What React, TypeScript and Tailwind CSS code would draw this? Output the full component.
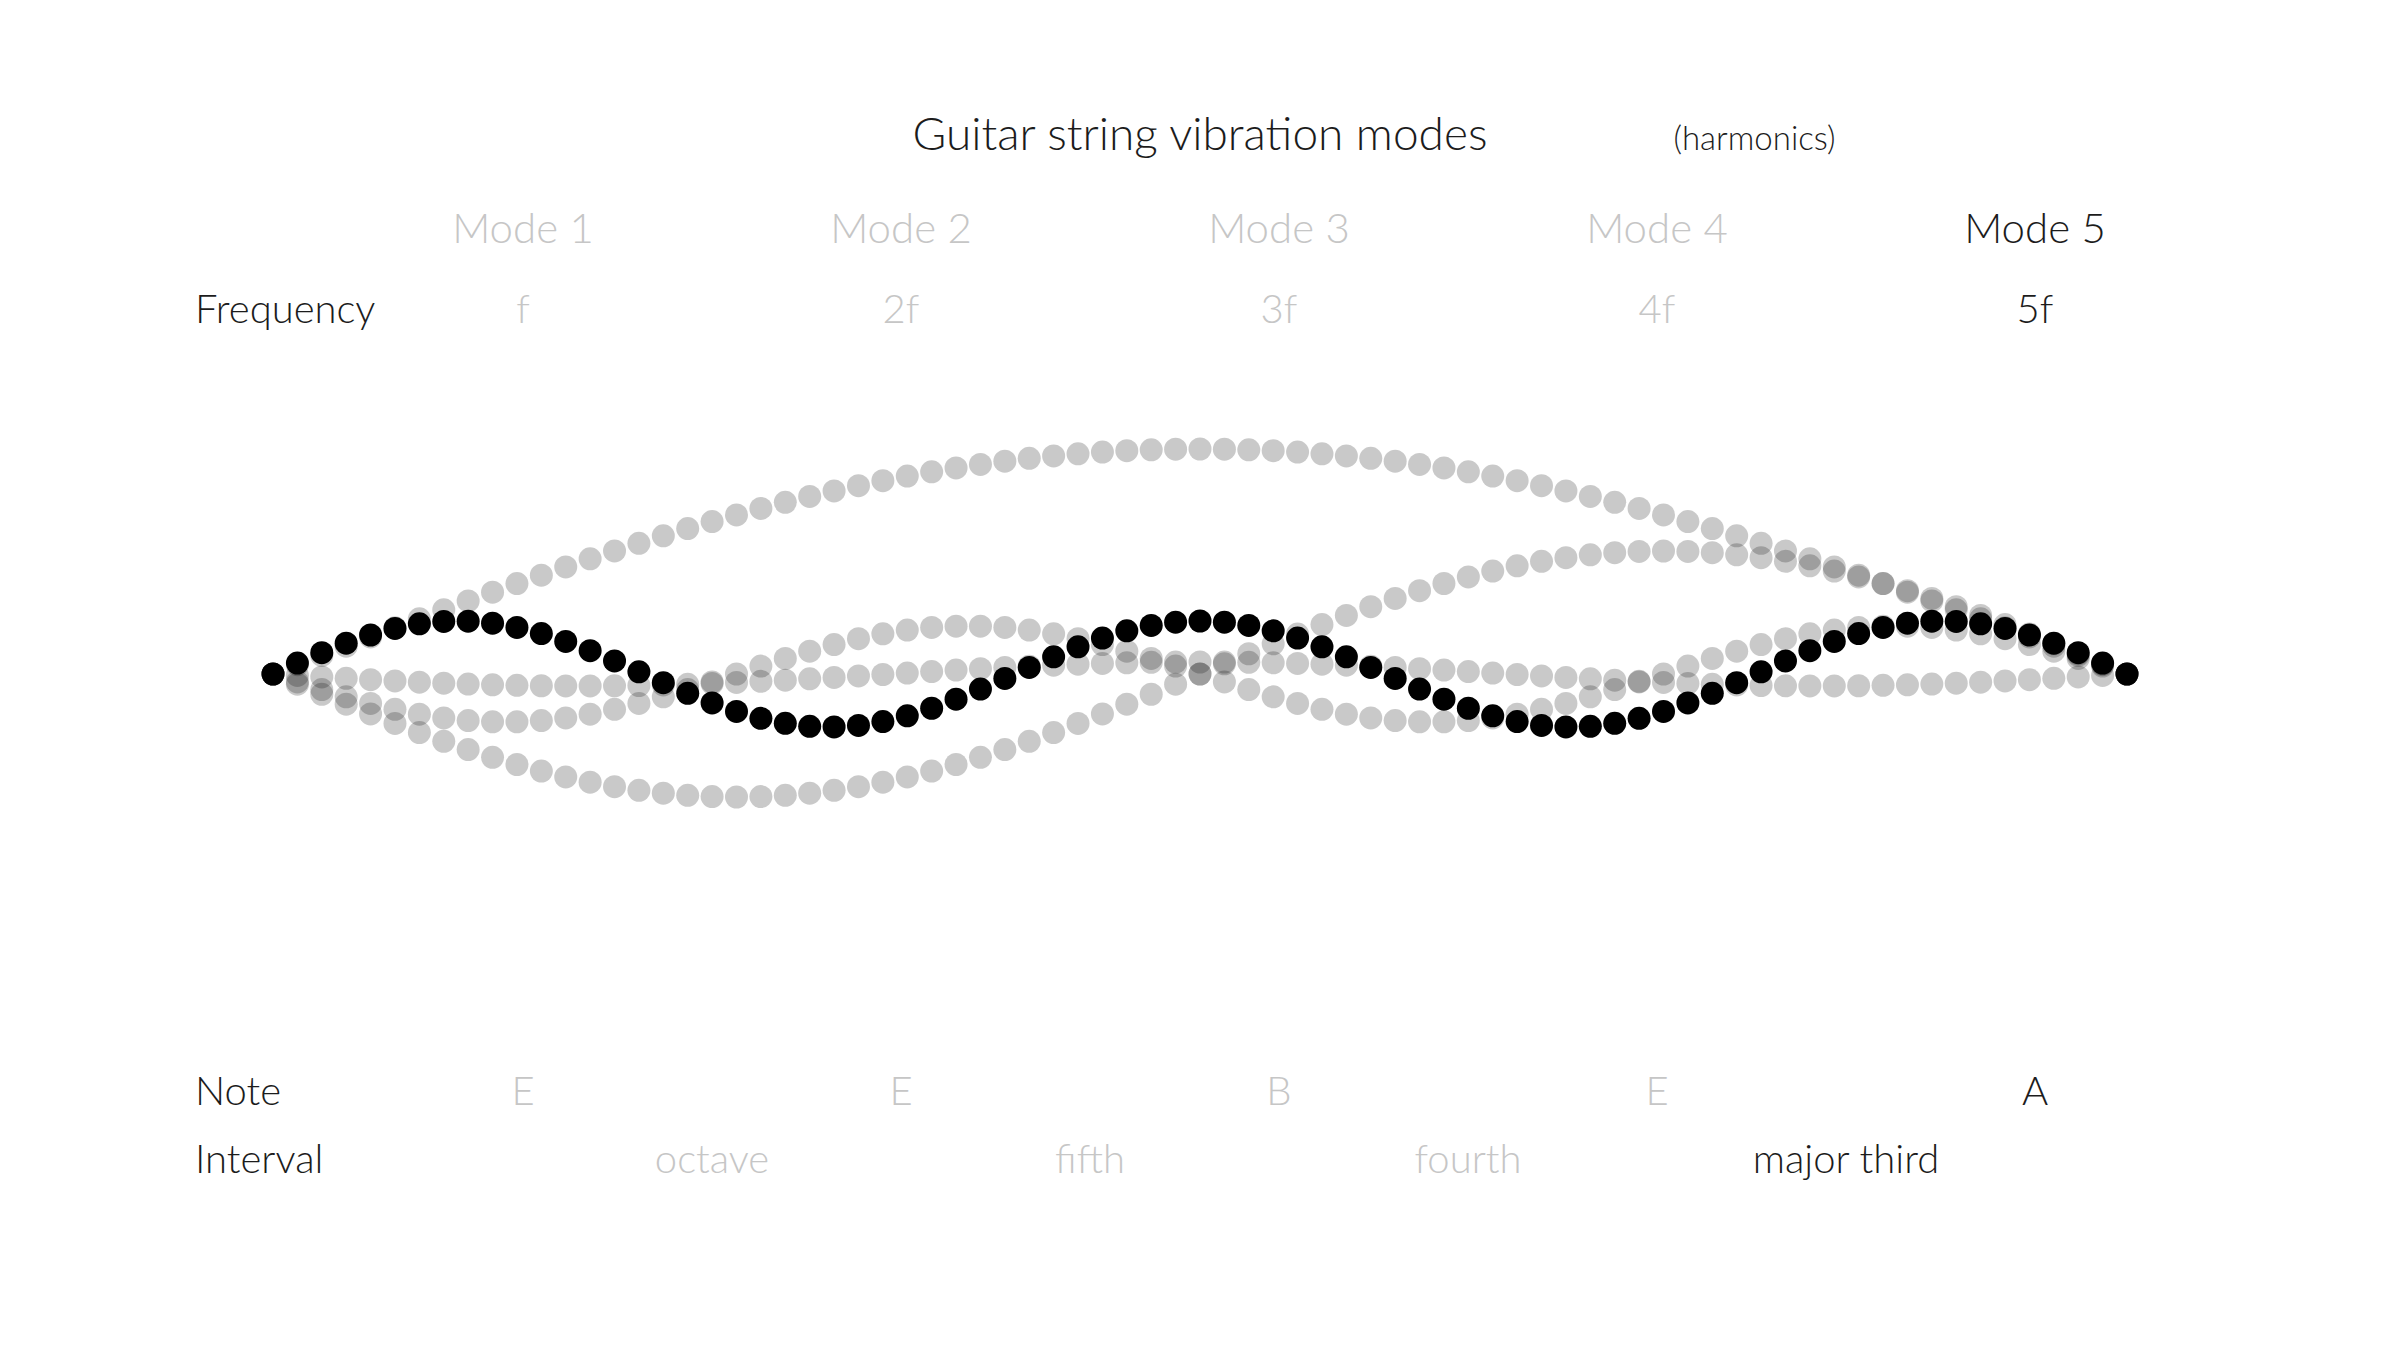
import React from "react";

const MODES = ["Mode 1", "Mode 2", "Mode 3", "Mode 4", "Mode 5"];
const FREQS = ["f", "2f", "3f", "4f", "5f"];
const NOTES = ["E", "E", "B", "E", "A"];
const INTERVALS = ["octave", "fifth", "fourth", "major third"];

// snapshot of each mode: amplitude (px, + = downward) and harmonic number
const WAVES = [
  { n: 1, amp: -225 },
  { n: 2, amp: 123 },
  { n: 3, amp: 12 },
  { n: 4, amp: 48 },
];
const ACTIVE = { n: 5, amp: -53 };

const X0 = 273;
const X1 = 2127;
const CY = 255;
const DOTS = 77;

function dots(n: number, amp: number) {
  return Array.from({ length: DOTS }, (_, i) => {
    const u = i / (DOTS - 1);
    return { x: X0 + u * (X1 - X0), y: CY + amp * Math.sin(n * Math.PI * u) };
  });
}

function StringPlot() {
  return (
    <svg width="2400" height="410" viewBox="0 0 2400 410" className="block">
      {WAVES.map((w) => (
        <g key={w.n} fill="#000" fillOpacity={0.21}>
          {dots(w.n, w.amp).map((p, i) => (
            <circle key={i} cx={p.x} cy={p.y} r={11.5} />
          ))}
        </g>
      ))}
      <g fill="#000">
        {dots(ACTIVE.n, ACTIVE.amp).map((p, i) => (
          <circle key={i} cx={p.x} cy={p.y} r={11.5} />
        ))}
      </g>
    </svg>
  );
}

export default function App() {
  const tone = (i: number) => (i === 4 ? "text-[#1c1c1c]" : "text-[#c6c6c6]");

  return (
    <div className="h-[1350px] w-[2400px] overflow-hidden bg-white pt-[110px] font-['Lato','Liberation_Sans',sans-serif] font-light text-[#1c1c1c]">
      <div className="grid grid-cols-[1fr_auto_1fr] items-baseline">
        <div />
        <div className="text-[46px] leading-none">Guitar string vibration modes</div>
        <div className="pl-[186px] text-[33px] leading-none">(harmonics)</div>
      </div>

      <div className="mt-[50px] grid grid-cols-[139px_repeat(5,378px)] pl-[195px] text-[42px] leading-none">
        <div />
        {MODES.map((m, i) => (
          <div key={m} className={`text-center ${tone(i)}`}>
            {m}
          </div>
        ))}
      </div>

      <div className="mt-[40px] grid grid-cols-[139px_repeat(5,378px)] pl-[195px] text-[40px] leading-none">
        <div className="whitespace-nowrap">Frequency</div>
        {FREQS.map((f, i) => (
          <div key={f} className={`text-center ${tone(i)}`}>
            {f}
          </div>
        ))}
      </div>

      <div className="mt-[91px]">
        <StringPlot />
      </div>

      <div className="mt-[241px] grid grid-cols-[139px_repeat(5,378px)] pl-[195px] text-[40px] leading-none">
        <div>Note</div>
        {NOTES.map((n, i) => (
          <div key={i} className={`text-center ${tone(i)}`}>
            {n}
          </div>
        ))}
      </div>

      <div className="mt-[28px] grid grid-cols-[328px_repeat(4,378px)] pl-[195px] text-[40px] leading-none">
        <div>Interval</div>
        {INTERVALS.map((t, i) => (
          <div key={t} className={`text-center ${i === 3 ? "text-[#1c1c1c]" : "text-[#c6c6c6]"}`}>
            {t}
          </div>
        ))}
      </div>
    </div>
  );
}
